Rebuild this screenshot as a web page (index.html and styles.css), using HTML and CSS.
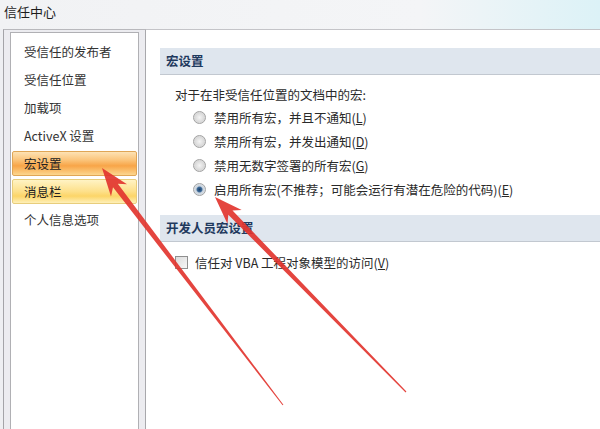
FILE: index.html
```html
<!DOCTYPE html>
<html lang="zh-CN">
<head>
<meta charset="utf-8">
<title>信任中心</title>
<link rel="stylesheet" href="styles.css">
</head>
<body>
<div class="window">
  <div class="titlebar">信任中心</div>
  <div class="main">
    <div class="nav-frame">
      <ul class="nav-list">
        <li class="nav-item">受信任的发布者</li>
        <li class="nav-item">受信任位置</li>
        <li class="nav-item">加载项</li>
        <li class="nav-item">ActiveX 设置</li>
        <li class="nav-item selected">宏设置</li>
        <li class="nav-item hover">消息栏</li>
        <li class="nav-item">个人信息选项</li>
      </ul>
    </div>
    <div class="content">
      <div class="section-head">宏设置</div>
      <div class="intro">对于在非受信任位置的文档中的宏:</div>
      <div class="radio-list">
        <div class="option"><span class="radio"></span><span>禁用所有宏，并且不通知(<u>L</u>)</span></div>
        <div class="option"><span class="radio"></span><span>禁用所有宏，并发出通知(<u>D</u>)</span></div>
        <div class="option"><span class="radio"></span><span>禁用无数字签署的所有宏(<u>G</u>)</span></div>
        <div class="option"><span class="radio checked"></span><span>启用所有宏(不推荐；可能会运行有潜在危险的代码)(<u>E</u>)</span></div>
      </div>
      <div class="section-head second">开发人员宏设置</div>
      <div class="check-row"><span class="checkbox"></span><span>信任对 VBA 工程对象模型的访问(<u>V</u>)</span></div>
    </div>
  </div>
  <svg class="arrows" width="600" height="429" viewBox="0 0 600 429">
    <polygon class="arrow" points="102,168 127,184.2 117.8,183.7 283.4,404.7 282.6,405.3 113,187.3 111,196.4"/>
    <polygon class="arrow" points="215,197 241.7,210 232.5,210.6 406.4,391.6 405.6,392.4 228.3,214.8 227.5,224"/>
  </svg>
</div>
</body>
</html>
```

FILE: styles.css
```css
* { box-sizing: border-box; }
html, body { margin: 0; padding: 0; }
body {
  width: 600px;
  height: 429px;
  overflow: hidden;
  font-family: "Noto Sans CJK SC", "Noto Sans", sans-serif;
  font-size: 12.5px;
  color: #2a2a2a;
  background: #eeeff2;
}
.window {
  position: relative;
  width: 600px;
  height: 429px;
  display: flex;
  flex-direction: column;
}
.titlebar {
  height: 29px;
  padding: 3px 0 0 4px;
  font-size: 13px;
  line-height: 18px;
  color: #1c1c1c;
  background: linear-gradient(to right, #f1f2f4 0%, #f4f5f7 70%, #dcf2f7 100%);
}
.main {
  flex: 1;
  display: flex;
  padding-left: 3px;
  min-height: 0;
}
.nav-frame {
  width: 142px;
  border-left: 1px solid #a4a4a8;
  border-top: 1px solid #b8b8bc;
  background: #ececf0;
  padding: 2px 6px 0 6px;
  display: flex;
}
.nav-list {
  list-style: none;
  margin: 0;
  padding: 6px 1px 0 1px;
  flex: 1;
  background: #fff;
  border: 1px solid #b0b0b4;
  border-bottom: none;
}
.nav-item {
  height: 25px;
  margin-bottom: 3px;
  padding-left: 11px;
  line-height: 24px;
  border: 1px solid transparent;
  border-radius: 2px;
  color: #333;
  white-space: nowrap;
}
.nav-item.selected {
  border-color: #e0a656;
  background: linear-gradient(to bottom, #fde2b4 0%, #fbc47a 35%, #f8a548 60%, #fcd68e 100%);
  color: #222;
}
.nav-item.hover {
  border-color: #e8cd7c;
  background: linear-gradient(to bottom, #fff3c4 0%, #fde08a 50%, #fcd568 70%, #fef0b8 100%);
  color: #222;
}
.content {
  flex: 1;
  background: #fff;
  border-left: 1px solid #a8a8ac;
  border-top: 1px solid #c4c4c8;
  padding: 18px 0 0 14px;
}
.section-head {
  height: 27px;
  padding-left: 6px;
  line-height: 26px;
  font-weight: bold;
  color: #1f3a5e;
  background: #dfe6ee;
  border-bottom: 1px solid #c2c8d0;
}
.section-head.second {
  margin-top: 14px;
}
.intro {
  margin-top: 12px;
  padding-left: 15px;
  line-height: 16px;
  color: #2a2a2a;
}
.radio-list {
  margin-top: 2px;
  padding-left: 33px;
}
.option {
  height: 24px;
  display: flex;
  align-items: center;
  gap: 8px;
  color: #2a2a2a;
}
.radio {
  width: 13px;
  height: 13px;
  border-radius: 50%;
  border: 1px solid #a2a2a2;
  background: radial-gradient(circle at 50% 50%, #f4f4f4 0%, #d9d9d9 60%, #e8e8e8 100%);
  flex: none;
}
.radio.checked {
  background: radial-gradient(circle at 50% 50%, #1d3f66 0%, #3d6a98 30%, #c9d3dd 45%, #eceff2 100%);
}
.check-row {
  margin-top: 10px;
  height: 20px;
  padding-left: 15px;
  display: flex;
  align-items: center;
  gap: 7px;
  color: #2a2a2a;
}
.checkbox {
  width: 13px;
  height: 13px;
  border: 1px solid #8f8f8f;
  background: linear-gradient(135deg, #dcdcdc 0%, #f6f6f6 100%);
  flex: none;
}
u { text-underline-offset: 1px; }
.arrows {
  position: absolute;
  left: 0;
  top: 0;
  pointer-events: none;
}
.arrow {
  fill: #e2352f;
  opacity: 0.92;
}
```
